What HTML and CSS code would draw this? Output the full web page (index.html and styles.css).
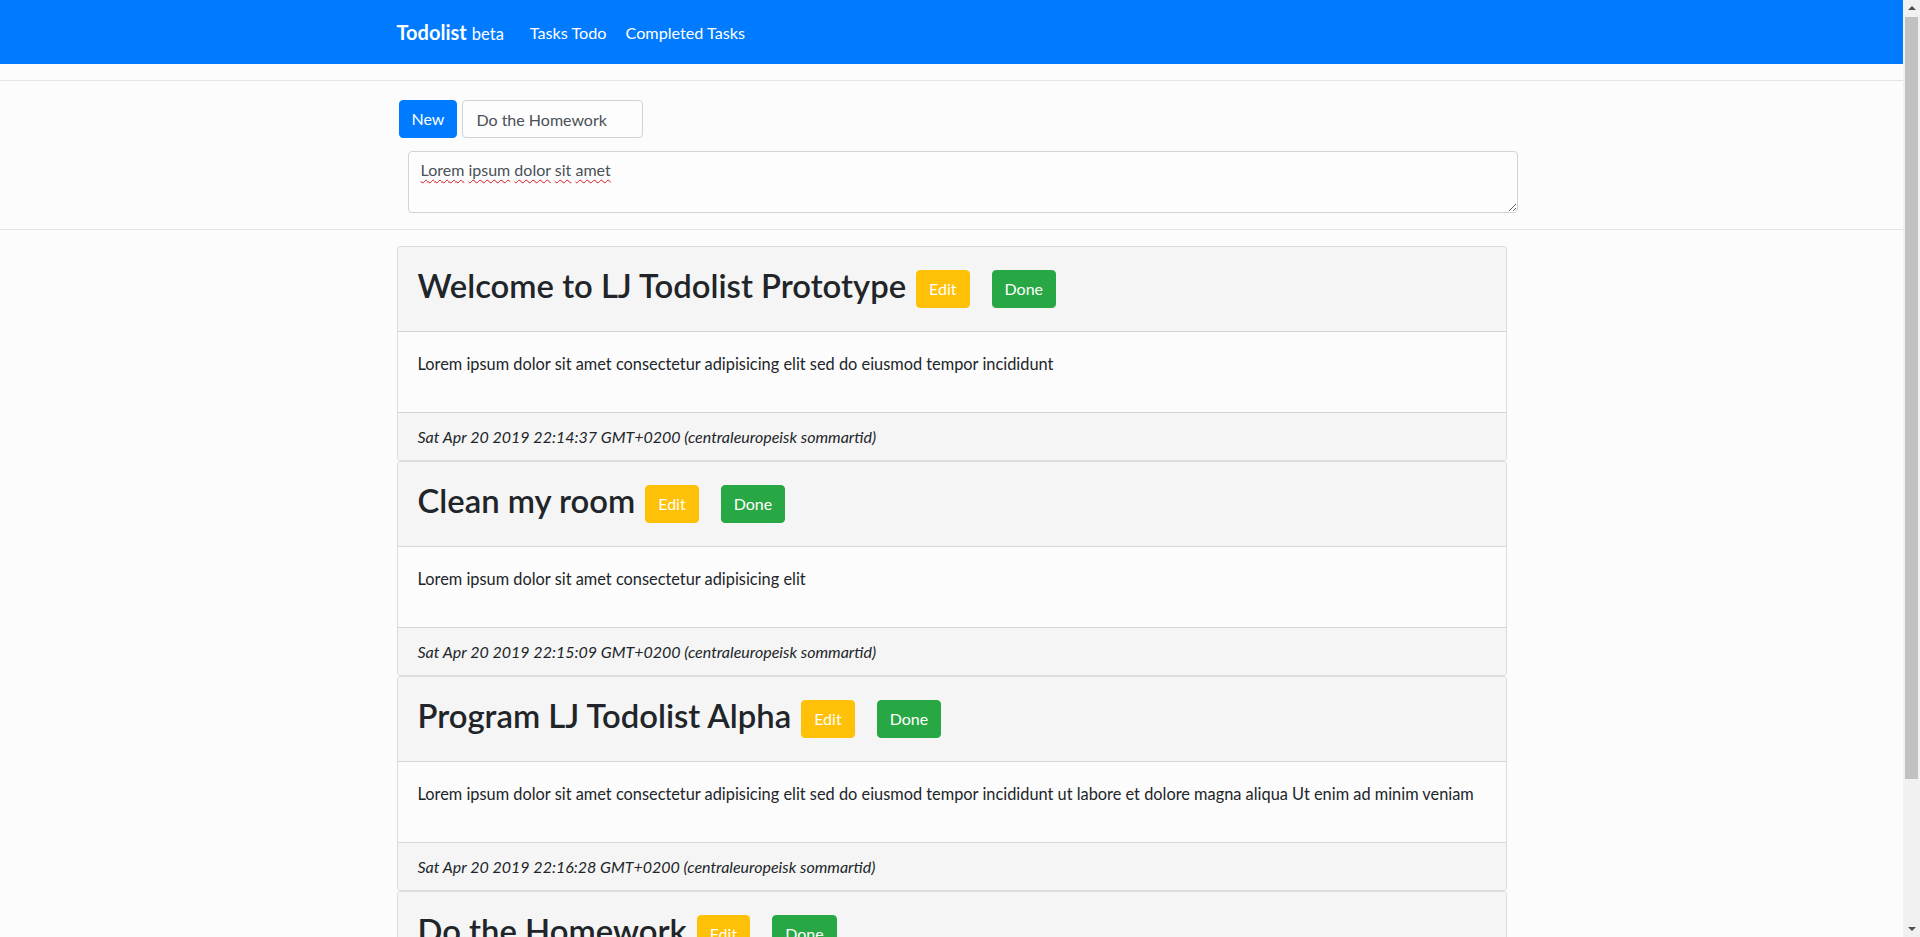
FILE: index.html
```html
<!DOCTYPE html>
<html lang="en">
<head>
<meta charset="utf-8">
<title>Todolist</title>
<link rel="stylesheet" href="styles.css">
</head>
<body>
<nav class="navbar">
  <div class="container nav-inner">
    <a class="brand" href="#"><strong>Todolist</strong> <span class="beta">beta</span></a>
    <a class="nav-link" href="#">Tasks Todo</a>
    <a class="nav-link" href="#">Completed Tasks</a>
  </div>
</nav>

<section class="new-task">
  <div class="container">
    <div class="new-row">
      <button class="btn btn-primary">New</button>
      <input class="title-input" type="text" value="Do the Homework">
    </div>
    <div class="desc-box"><span class="sp">Lorem</span> <span class="sp">ipsum</span> <span class="sp">dolor</span> <span class="sp">sit</span> <span class="sp">amet</span></div>
  </div>
</section>

<main class="container tasks">
  <div class="card">
    <div class="card-header">
      <h2 class="card-title">Welcome to LJ Todolist Prototype</h2>
      <button class="btn btn-warning">Edit</button>
      <button class="btn btn-success">Done</button>
    </div>
    <div class="card-body"><p>Lorem ipsum dolor sit amet consectetur adipisicing elit sed do eiusmod tempor incididunt</p></div>
    <div class="card-footer">Sat Apr 20 2019 22:14:37 GMT+0200 (centraleuropeisk sommartid)</div>
  </div>
  <div class="card">
    <div class="card-header">
      <h2 class="card-title">Clean my room</h2>
      <button class="btn btn-warning">Edit</button>
      <button class="btn btn-success">Done</button>
    </div>
    <div class="card-body"><p>Lorem ipsum dolor sit amet consectetur adipisicing elit</p></div>
    <div class="card-footer">Sat Apr 20 2019 22:15:09 GMT+0200 (centraleuropeisk sommartid)</div>
  </div>
  <div class="card">
    <div class="card-header">
      <h2 class="card-title">Program LJ Todolist Alpha</h2>
      <button class="btn btn-warning">Edit</button>
      <button class="btn btn-success">Done</button>
    </div>
    <div class="card-body"><p>Lorem ipsum dolor sit amet consectetur adipisicing elit sed do eiusmod tempor incididunt ut labore et dolore magna aliqua Ut enim ad minim veniam</p></div>
    <div class="card-footer">Sat Apr 20 2019 22:16:28 GMT+0200 (centraleuropeisk sommartid)</div>
  </div>
  <div class="card">
    <div class="card-header">
      <h2 class="card-title">Do the Homework</h2>
      <button class="btn btn-warning">Edit</button>
      <button class="btn btn-success">Done</button>
    </div>
    <div class="card-body"><p>Lorem ipsum dolor sit amet</p></div>
    <div class="card-footer">Sat Apr 20 2019 22:17:02 GMT+0200 (centraleuropeisk sommartid)</div>
  </div>
</main>

<div class="scrollbar" aria-hidden="true">
  <div class="sb-arrow sb-up"></div>
  <div class="sb-track"><div class="sb-thumb"></div></div>
  <div class="sb-arrow sb-down"></div>
</div>
</body>
</html>
```

FILE: styles.css
```css
* {
  box-sizing: border-box;
}
body {
  margin: 0 17px 0 0;
  background: #fcfcfc;
  color: #212529;
  font-family: Lato, "Open Sans", sans-serif;
  font-size: 16px;
  line-height: 24px;
}
.container {
  width: 1140px;
  margin: 0 auto;
  padding: 0 15px;
}
.navbar {
  background: #007bff;
  height: 64px;
}
.nav-inner {
  display: flex;
  align-items: center;
  height: 64px;
  padding-top: 2px;
}
.brand {
  color: #fff;
  text-decoration: none;
  font-size: 20px;
  margin-right: 18px;
}
.brand strong {
  font-weight: 700;
}
.beta {
  font-size: 16.5px;
}
.nav-link {
  color: #fff;
  text-decoration: none;
  padding: 0 8px;
  margin-right: 3px;
  font-size: 16.2px;
}
.new-task {
  margin-top: 16px;
  border-top: 1px solid #e4e4e4;
  border-bottom: 1px solid #e4e4e4;
  padding: 19px 0 16px;
}
.new-row {
  display: flex;
  gap: 5px;
  padding-left: 2px;
}
.btn {
  font-family: inherit;
  font-size: 16px;
  line-height: 24px;
  padding: 6px 12px;
  border: 1px solid transparent;
  border-radius: 4px;
  color: #fff;
  cursor: pointer;
}
.btn-primary {
  background: #007bff;
  border-color: #007bff;
}
.btn-warning {
  background: #ffc107;
  border-color: #ffc107;
  margin-left: 10px;
}
.btn-success {
  background: #28a745;
  border-color: #28a745;
  margin-left: 22px;
}
.title-input {
  width: 181px;
  height: 38px;
  padding: 6px 13px;
  font-family: inherit;
  font-size: 16px;
  color: #495057;
  background: #fdfdfd;
  border: 1px solid #ced4da;
  border-radius: 4px;
}
.desc-box {
  margin: 13px 0 0 11px;
  width: 1110px;
  height: 62px;
  padding: 6px 12px;
  border: 1px solid #ced4da;
  border-radius: 4px;
  color: #495057;
  background: #fdfdfd;
  overflow: auto;
  resize: vertical;
}
.sp {
  text-decoration: underline wavy #e0141e;
  text-decoration-thickness: 1px;
  text-underline-offset: 3px;
}
.tasks {
  padding-top: 16px;
}
.card {
  border: 1px solid rgba(0, 0, 0, 0.125);
  border-radius: 4px;
  background: #fcfcfc;
  overflow: hidden;
}
.card-header {
  display: flex;
  align-items: center;
  height: 85px;
  padding: 0 20px 1px;
  background: #f5f5f5;
  border-bottom: 1px solid rgba(0, 0, 0, 0.125);
}
.card-title {
  margin: 0;
  font-size: 32.8px;
  line-height: 38px;
  font-weight: 600;
  margin-top: -5px;
}
.card-body {
  padding: 20px 20px;
  font-size: 16.35px;
}
.card-body p {
  margin: 0 0 16px;
}
.card-footer {
  padding: 12px 20px 11px;
  background: #f5f5f5;
  border-top: 1px solid rgba(0, 0, 0, 0.125);
  font-style: italic;
}

/* browser scrollbar as it appears in the screenshot */
.scrollbar {
  position: fixed;
  top: 0;
  right: 0;
  width: 17px;
  height: 100vh;
  background: #f1f1f1;
  display: flex;
  flex-direction: column;
}
.sb-arrow {
  height: 17px;
  position: relative;
}
.sb-arrow::after {
  content: "";
  position: absolute;
  left: 5px;
  border-left: 4px solid transparent;
  border-right: 4px solid transparent;
}
.sb-up::after {
  top: 6px;
  border-bottom: 4px solid #505050;
}
.sb-down::after {
  top: 7px;
  border-top: 4px solid #505050;
}
.sb-track {
  flex: 1;
  padding: 0 2px;
}
.sb-thumb {
  height: 762px;
  background: #c1c1c1;
}
```
